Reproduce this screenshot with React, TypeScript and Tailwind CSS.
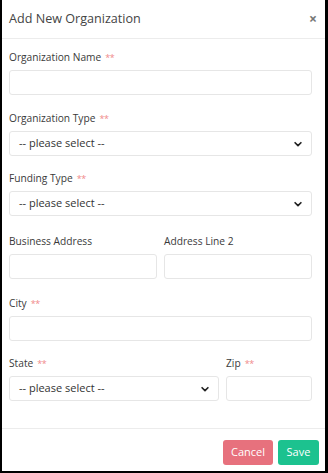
import { useState } from 'react';

const Req = () => <span className="ml-1 text-[#f08a8a] text-[9px] tracking-tighter">**</span>;

const Label = ({ text, required }: { text: string; required?: boolean }) => (
    <label className="block h-[14px] leading-[14px] text-[10.2px] text-[#3a3a3a] mb-[6px]">
        {text}
        {required && <Req />}
    </label>
);

const TextInput = () => (
    <input
        type="text"
        className="block w-full h-[25px] rounded-[3px] border border-[#e6e6e6] bg-white px-2 text-[11px] outline-none"
    />
);

const Select = () => (
    <div className="relative w-full h-[25px] rounded-[3px] border border-[#e6e6e6] bg-white flex items-center pl-[9px] pr-[8px]">
        <span className="flex-1 text-[11px] text-[#333]">-- please select --</span>
        <svg className="w-[10px] h-[10px]" viewBox="0 0 24 24" fill="none" stroke="#222" strokeWidth={4} strokeLinecap="round" strokeLinejoin="round">
            <path d="M5 9l7 7 7-7" />
        </svg>
    </div>
);

const App = () => {
    const [open] = useState(true);
    if (!open) return null;

    return (
        <div
            className="w-[328px] h-[473px] bg-white border-l-2 border-r-[3px] border-b-2 border-black flex flex-col text-[#333]"
            style={{ fontFamily: '"Open Sans", "Liberation Sans", sans-serif' }}>
            {/* header */}
            <div className="h-[39px] border-b border-[#ececec] flex items-center pl-[7px] pr-[8px] shrink-0">
                <h1 className="flex-1 text-[12.6px] text-[#444]">Add New Organization</h1>
                <span className="text-[14px] font-bold text-[#777] leading-none">×</span>
            </div>

            {/* body */}
            <div className="flex-1 pl-[7px] pr-[13px] pt-[11px]">
                <div className="mb-[16px]">
                    <Label text="Organization Name" required />
                    <TextInput />
                </div>
                <div className="mb-[15px]">
                    <Label text="Organization Type" required />
                    <Select />
                </div>
                <div className="mb-[18px]">
                    <Label text="Funding Type" required />
                    <Select />
                </div>
                <div className="mb-[17px] flex gap-[7px]">
                    <div className="w-[148px]">
                        <Label text="Business Address" />
                        <TextInput />
                    </div>
                    <div className="flex-1">
                        <Label text="Address Line 2" />
                        <TextInput />
                    </div>
                </div>
                <div className="mb-[15px]">
                    <Label text="City" required />
                    <TextInput />
                </div>
                <div className="flex gap-[7px]">
                    <div className="w-[210px]">
                        <Label text="State" required />
                        <Select />
                    </div>
                    <div className="flex-1">
                        <Label text="Zip" required />
                        <TextInput />
                    </div>
                </div>
            </div>

            {/* footer */}
            <div className="h-[43px] border-t border-[#ececec] flex items-start justify-end gap-[5px] pt-[11px] pr-[6px] shrink-0">
                <button className="h-[25px] w-[50px] rounded-[3px] bg-[#e7717d] text-white text-[11px]">Cancel</button>
                <button className="h-[25px] w-[41px] rounded-[3px] bg-[#1cc28f] text-white text-[11px]">Save</button>
            </div>
        </div>
    );
};

export default App;
